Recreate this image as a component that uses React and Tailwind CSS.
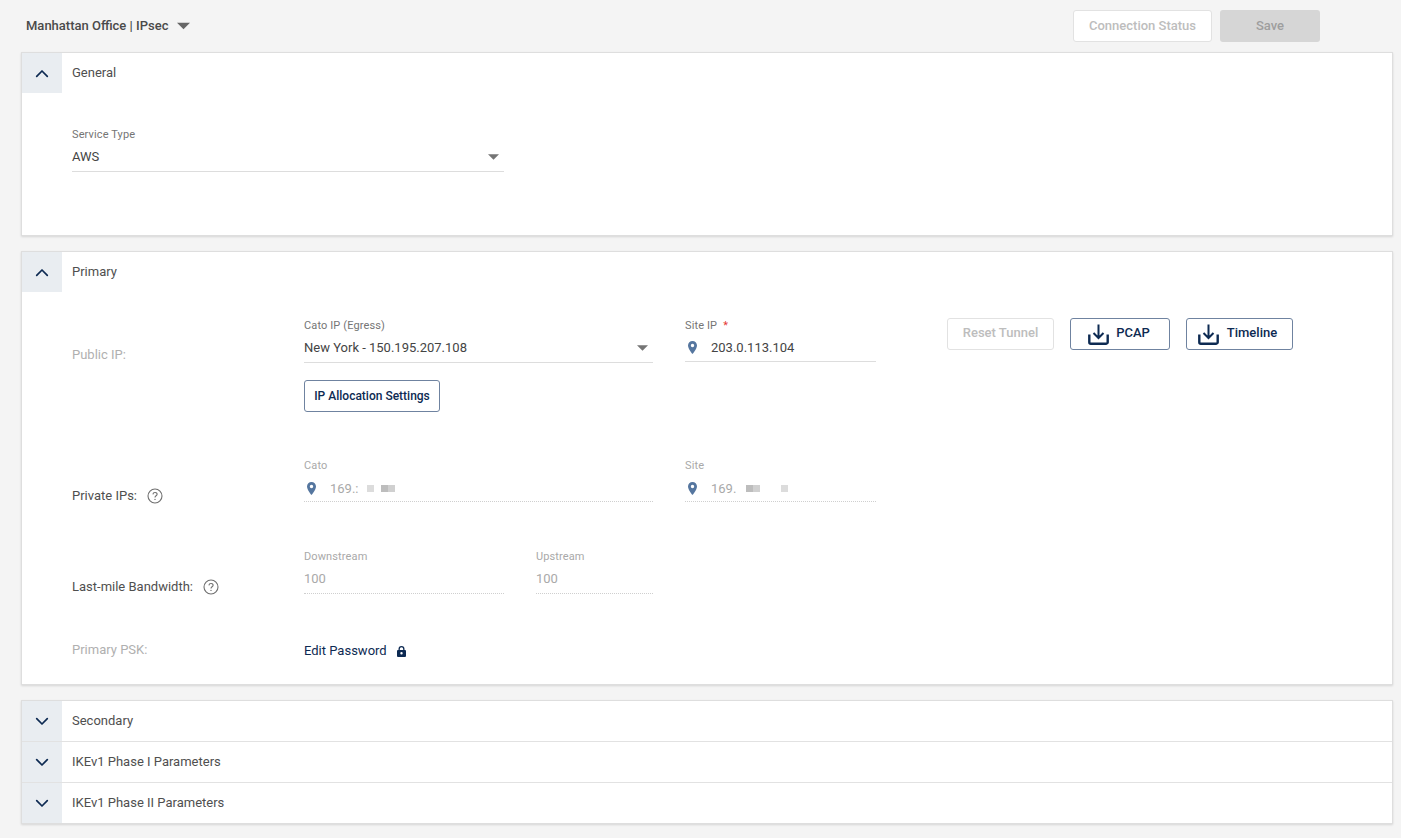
import React from "react";

const Chevron = ({ up }) => (
  <svg width="14" height="9" viewBox="0 0 14 9" fill="none" stroke="#0d2a52" strokeWidth="1.7" strokeLinecap="round" strokeLinejoin="round">
    {up ? <path d="M1.7 7.3 7 2l5.3 5.3" /> : <path d="M1.7 1.7 7 7l5.3-5.3" />}
  </svg>
);

const Caret = ({ w = 11, h = 6, color = "#757575" }) => (
  <svg width={w} height={h} viewBox="0 0 10 5"><path d="M0 0h10L5 5z" fill={color} /></svg>
);

const Pin = () => (
  <svg width="9" height="13" viewBox="0 0 9 13" className="shrink-0">
    <path fillRule="evenodd" d="M4.5 0C2 0 0 2 0 4.5 0 7.8 4.5 13 4.5 13S9 7.8 9 4.5C9 2 7 0 4.5 0zm0 6.2a1.7 1.7 0 1 1 0-3.4 1.7 1.7 0 0 1 0 3.4z" fill="#55769f" />
  </svg>
);

const Help = () => (
  <svg width="16" height="16" viewBox="0 0 16 16" fill="none" className="mt-[2px] shrink-0">
    <circle cx="8" cy="8" r="7" stroke="#6f6f6f" strokeWidth="1.1" />
    <path d="M5.9 6.3A2.1 2.1 0 0 1 8 4.5c1.2 0 2.1.8 2.1 1.8 0 1.5-2.1 1.5-2.1 3.1" stroke="#6f6f6f" strokeWidth="1.1" />
    <circle cx="8" cy="11.4" r=".7" fill="#6f6f6f" />
  </svg>
);

const Download = () => (
  <svg width="21" height="21" viewBox="0 0 21 21" fill="none" stroke="#0d2a52" className="shrink-0">
    <path d="M10.500 0.500v13M5.500 9l5 5 5-5" strokeWidth="2" />
    <path d="M1.300 10.500v7.700a1.500 1.500 0 0 0 1.500 1.500h15.400a1.500 1.500 0 0 0 1.500-1.500v-7.700" strokeWidth="2.400" />
  </svg>
);

const Lock = () => (
  <svg width="9" height="11" viewBox="0 0 9 11">
    <path fillRule="evenodd" d="M1.500 4V3a3 3 0 0 1 6 0v1H8a1 1 0 0 1 1 1v5a1 1 0 0 1-1 1H1a1 1 0 0 1-1-1V5a1 1 0 0 1 1-1h.5zm1.300 0h3.400V3a1.700 1.700 0 0 0-3.400 0v1zM4.500 6a1.200 1.200 0 1 0 0 2.400 1.200 1.200 0 0 0 0-2.400z" fill="#0d2a52" />
  </svg>
);

const Toggle = ({ up, title, border }) => (
  <div className={`flex ${border ? "h-[41px] border-t border-[#e2e2e2]" : "h-[40px]"}`}>
    <div className="flex w-10 shrink-0 items-center justify-center bg-[#e9edf1]">
      <Chevron up={up} />
    </div>
    <div className="flex items-center pl-2.5 text-[13px] text-[#4f4f4f]">{title}</div>
  </div>
);

const Card = ({ children, className = "" }) => (
  <section className={`border border-[#dedede] bg-white shadow-[0_1px_2px_rgba(0,0,0,0.12)] ${className}`}>{children}</section>
);

const Label = ({ children, disabled, className = "" }) => (
  <div className={`h-[13px] text-[11px] leading-[13px] tracking-[0.12px] ${disabled ? "text-[#a9a9a9]" : "text-[#757575]"} ${className}`}>{children}</div>
);

const Redact = ({ w, color = "#dcdcdc" }) => <span className="inline-block h-[7px]" style={{ width: w, backgroundColor: color }} />;

const OutlineBtn = ({ children, className = "" }) => (
  <button className={`flex h-8 items-center justify-center rounded-[3px] border border-[#6f83a0] bg-white font-medium text-[#0d2a52] ${className}`}>
    {children}
  </button>
);

export default function App() {
  return (
    <div className="h-[838px] w-[1401px] overflow-hidden bg-[#f4f4f4] pl-[21px] pr-2 font-['Roboto',sans-serif]">
      <header className="flex h-[52px] items-center pb-[1px] pl-[5px] pr-[73px]">
        <span className="text-[13px] font-medium text-[#4a4a4a]">Manhattan Office | IPsec</span>
        <span className="ml-[9px]"><Caret w={13} h={8} color="#666666" /></span>
        <button className="ml-auto h-8 w-[139px] rounded-[3px] border border-[#e2e2e2] bg-white text-[13px] font-medium text-[#bdbdbd]">Connection Status</button>
        <button className="ml-2 h-8 w-[100px] rounded-[3px] bg-[#d6d6d6] text-[13px] font-medium text-[#9e9e9e]">Save</button>
      </header>

      <div className="flex flex-col gap-[15px]">
        <Card className="h-[184px]">
          <Toggle up title="General" />
          <div className="ml-[50px] mt-[35px] w-[432px] border-b border-[#dddddd] pb-[5px]">
            <Label>Service Type</Label>
            <div className="mt-[6px] flex h-[19px] items-center justify-between pr-[5px] text-[13px] text-[#444444]">
              <span>AWS</span>
              <Caret />
            </div>
          </div>
        </Card>

        <Card className="h-[434px]">
          <Toggle up title="Primary" />
          <div className="flex flex-col pl-[50px] text-[13px]">
            <div className="mt-[25px] flex h-[94px]">
              <div className="w-[232px] pt-[28px] text-[#b0b0b0]">Public IP:</div>
              <div className="w-[349px] pt-[2px]">
                <div className="border-b border-[#dddddd] pb-[5px]">
                  <Label>Cato IP (Egress)</Label>
                  <div className="mt-[6px] flex h-[19px] items-center justify-between pr-[5px] text-[#444444]">
                    <span>New York - 150.195.207.108</span>
                    <Caret />
                  </div>
                </div>
                <OutlineBtn className="mt-[17px] w-[136px] pb-[1px] text-xs">IP Allocation Settings</OutlineBtn>
              </div>
              <div className="ml-8 w-[191px] pt-[2px]">
                <div className="border-b border-[#dddddd] pb-[4px]">
                  <Label className="flex gap-[6px]">Site IP <span className="text-[#e53935]">*</span></Label>
                  <div className="mt-[6px] flex h-[19px] items-center gap-[14px] pl-[3px] text-[#444444]">
                    <Pin /><span>203.0.113.104</span>
                  </div>
                </div>
              </div>
              <div className="ml-[71px] flex gap-4 pt-[1px]">
                <button className="h-8 w-[107px] rounded-[3px] border border-[#e2e2e2] bg-white pb-[2px] font-medium text-[#bdbdbd]">Reset Tunnel</button>
                <OutlineBtn className="w-[100px] gap-[7px] pr-[2px]"><Download /><span className="mb-0.5">PCAP</span></OutlineBtn>
                <OutlineBtn className="w-[107px] gap-[8px] pr-[4px]"><Download /><span className="mb-0.5">Timeline</span></OutlineBtn>
              </div>
            </div>

            <div className="mt-[48px] flex h-[43px]">
              <div className="flex w-[232px] items-start gap-[10px] pt-[27px] text-[#4f4f4f]">Private IPs: <Help /></div>
              <div className="w-[349px] border-b border-dotted border-[#cfcfcf]">
                <Label disabled>Cato</Label>
                <div className="mt-[7px] flex h-[19px] items-center pl-[3px] text-[#a9a9a9]">
                  <Pin /><span className="ml-[14px] w-[37px] overflow-hidden">169.:</span><Redact w={7} /><span className="ml-[7px]" /><Redact w={7} color="#bdbdbd" /><Redact w={7} color="#d0d0d0" />
                </div>
              </div>
              <div className="ml-8 w-[191px] border-b border-dotted border-[#cfcfcf]">
                <Label disabled>Site</Label>
                <div className="mt-[7px] flex h-[19px] items-center pl-[3px] text-[#a9a9a9]">
                  <Pin /><span className="ml-[14px] w-[35px]">169.</span><Redact w={7} color="#bdbdbd" /><Redact w={7} color="#d0d0d0" /><span className="ml-[21px]" /><Redact w={7} />
                </div>
              </div>
            </div>

            <div className="mt-[48px] flex h-[44px]">
              <div className="flex w-[232px] items-start gap-[10px] pt-[27px] text-[#4f4f4f]">Last-mile Bandwidth: <Help /></div>
              <div className="w-[200px] border-b border-dotted border-[#cfcfcf]">
                <Label disabled>Downstream</Label>
                <div className="mt-[6px] flex h-[19px] items-center text-[#a9a9a9]">100</div>
              </div>
              <div className="ml-8 w-[117px] border-b border-dotted border-[#cfcfcf]">
                <Label disabled>Upstream</Label>
                <div className="mt-[6px] flex h-[19px] items-center text-[#a9a9a9]">100</div>
              </div>
            </div>

            <div className="mt-[47px] flex h-[20px] items-center">
              <div className="w-[232px] pb-[2px] text-[#b0b0b0]">Primary PSK:</div>
              <span className="text-[#0d2a52]">Edit Password</span>
              <span className="ml-[10px] flex"><Lock /></span>
            </div>
          </div>
        </Card>

        <Card className="h-[124px]">
          <Toggle title="Secondary" />
          <Toggle title="IKEv1 Phase I Parameters" border />
          <Toggle title="IKEv1 Phase II Parameters" border />
        </Card>
      </div>
    </div>
  );
}
